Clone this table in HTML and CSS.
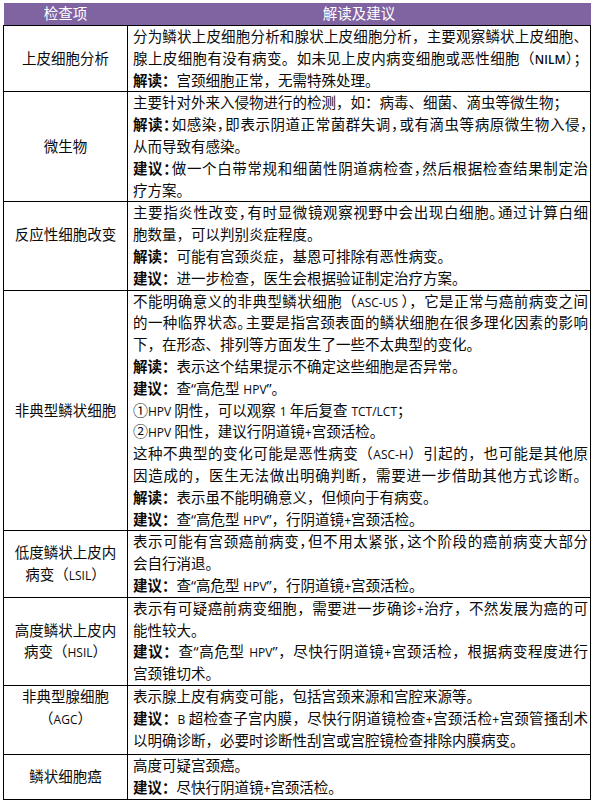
FILE: index.html
```html
<!DOCTYPE html>
<html lang="zh-CN">
<head>
<meta charset="utf-8">
<title>检查项 解读及建议</title>
<link rel="stylesheet" href="styles.css">
</head>
<body>
<table class="tbl">
  <colgroup><col class="c1"><col class="c2"></colgroup>
  <thead>
    <tr><th>检查项</th><th>解读及建议</th></tr>
  </thead>
  <tbody>
    <tr>
      <td class="k">上皮细胞分析</td>
      <td class="v">
        <span class="ln f">分为鳞状上皮细胞分析和腺状上皮细胞分析，主要观察鳞状上皮细胞、</span>
        <span class="ln f">腺上皮细胞有没有病变。如未见上皮内病变细胞或恶性细胞（<span class="en b">NILM</span>）；</span>
        <span class="ln"><b>解读：</b>宫颈细胞正常，无需特殊处理。</span>
      </td>
    </tr>
    <tr>
      <td class="k">微生物</td>
      <td class="v">
        <span class="ln">主要针对外来入侵物进行的检测，如：病毒、细菌、滴虫等微生物；</span>
        <span class="ln f"><b>解读<span class="p">：</span></b>如感染<span class="p">，</span>即表示阴道正常菌群失调<span class="p">，</span>或有滴虫等病原微生物入侵<span class="p">，</span></span>
        <span class="ln">从而导致有感染。</span>
        <span class="ln f"><b>建议<span class="p">：</span></b>做一个白带常规和细菌性阴道病检查<span class="p">，</span>然后根据检查结果制定治</span>
        <span class="ln">疗方案。</span>
      </td>
    </tr>
    <tr>
      <td class="k top2">反应性细胞改变</td>
      <td class="v">
        <span class="ln f">主要指炎性改变<span class="p">，</span>有时显微镜观察视野中会出现白细胞<span class="p">。</span>通过计算白细</span>
        <span class="ln">胞数量，可以判别炎症程度。</span>
        <span class="ln"><b>解读：</b>可能有宫颈炎症，基恩可排除有恶性病变。</span>
        <span class="ln"><b>建议：</b>进一步检查，医生会根据验证制定治疗方案。</span>
      </td>
    </tr>
    <tr>
      <td class="k">非典型鳞状细胞</td>
      <td class="v">
        <span class="ln f">不能明确意义的非典型鳞状细胞（<span class="en">ASC-US </span>），它是正常与癌前病变之间</span>
        <span class="ln f">的一种临界状态<span class="p">。</span>主要是指宫颈表面的鳞状细胞在很多理化因素的影响</span>
        <span class="ln">下，在形态、排列等方面发生了一些不太典型的变化。</span>
        <span class="ln"><b>解读：</b>表示这个结果提示不确定这些细胞是否异常。</span>
        <span class="ln"><b>建议：</b>查“高危型 <span class="en">HPV</span>”。</span>
        <span class="ln"><span class="cn">①</span><span class="en">HPV </span>阴性，可以观察 <span class="en">1 </span>年后复查 <span class="en">TCT/LCT</span>；</span>
        <span class="ln"><span class="cn">②</span><span class="en">HPV </span>阳性，建议行阴道镜<span class="en">+</span>宫颈活检。</span>
        <span class="ln f">这种不典型的变化可能是恶性病变（<span class="en">ASC-H</span>）引起的，也可能是其他原</span>
        <span class="ln f">因造成的，医生无法做出明确判断，需要进一步借助其他方式诊断。</span>
        <span class="ln"><b>解读：</b>表示虽不能明确意义，但倾向于有病变。</span>
        <span class="ln"><b>建议：</b>查“高危型 <span class="en">HPV</span>”，行阴道镜<span class="en">+</span>宫颈活检。</span>
      </td>
    </tr>
    <tr>
      <td class="k">低度鳞状上皮内<br>病变（<span class="en">LSIL</span>）</td>
      <td class="v">
        <span class="ln f">表示可能有宫颈癌前病变<span class="p">，</span>但不用太紧张<span class="p">，</span>这个阶段的癌前病变大部分</span>
        <span class="ln">会自行消退。</span>
        <span class="ln"><b>建议：</b>查“高危型 <span class="en">HPV</span>”，行阴道镜<span class="en">+</span>宫颈活检。</span>
      </td>
    </tr>
    <tr>
      <td class="k">高度鳞状上皮内<br>病变（<span class="en">HSIL</span>）</td>
      <td class="v">
        <span class="ln f">表示有可疑癌前病变细胞，需要进一步确诊<span class="en">+</span>治疗，不然发展为癌的可</span>
        <span class="ln">能性较大。</span>
        <span class="ln f"><b>建议：</b>查“高危型 <span class="en">HPV</span>”，尽快行阴道镜<span class="en">+</span>宫颈活检，根据病变程度进行</span>
        <span class="ln">宫颈锥切术。</span>
      </td>
    </tr>
    <tr class="tall">
      <td class="k top">非典型腺细胞<br>（<span class="en">AGC</span>）</td>
      <td class="v">
        <span class="ln">表示腺上皮有病变可能，包括宫颈来源和宫腔来源等。</span>
        <span class="ln f"><b>建议：</b><span class="en">B </span>超检查子宫内膜，尽快行阴道镜检查<span class="en">+</span>宫颈活检<span class="en">+</span>宫颈管搔刮术</span>
        <span class="ln">以明确诊断，必要时诊断性刮宫或宫腔镜检查排除内膜病变。</span>
      </td>
    </tr>
    <tr>
      <td class="k">鳞状细胞癌</td>
      <td class="v">
        <span class="ln">高度可疑宫颈癌。</span>
        <span class="ln"><b>建议：</b>尽快行阴道镜<span class="en">+</span>宫颈活检。</span>
      </td>
    </tr>
  </tbody>
</table>
</body>
</html>
```
FILE: styles.css
```css
html, body {
  margin: 0;
  padding: 0;
  background: #ffffff;
}

body {
  font-family: "Open Sans", "Noto Sans CJK SC", sans-serif;
  font-size: 14.5px;
  color: #0a0a0a;
}

.tbl {
  border-collapse: collapse;
  table-layout: fixed;
  width: 588px;
  margin: 3px 0 0 3px;
}

.c1 {
  width: 124px;
}

.tbl th {
  background: #8064a2;
  color: #ffffff;
  font-weight: normal;
  height: 22px;
  line-height: 22px;
  padding: 0;
  border: none;
  text-align: center;
}

.tbl td {
  border: 1px solid #000000;
  padding: 0;
  line-height: 21.8px;
}

.k {
  text-align: center;
  vertical-align: middle;
}

.k.top2 {
  vertical-align: top;
  padding-top: 21.8px;
}

.k.top {
  vertical-align: top;
}

.v {
  vertical-align: top;
  white-space: nowrap;
}

.tbl td.v {
  padding: 0 2px 0 5px;
}

.tbl .tall td.v {
  padding-bottom: 3px;
}

.ln {
  display: block;
  height: 21.8px;
}

.f {
  text-align: justify;
  text-align-last: justify;
}

.en {
  font-size: 12px;
  line-height: 1;
}

.en.b {
  font-weight: 600;
}

.cn {
  font-size: 15px;
  line-height: 1;
}

.p {
  letter-spacing: -0.45em;
}

b {
  font-weight: bold;
}
```
